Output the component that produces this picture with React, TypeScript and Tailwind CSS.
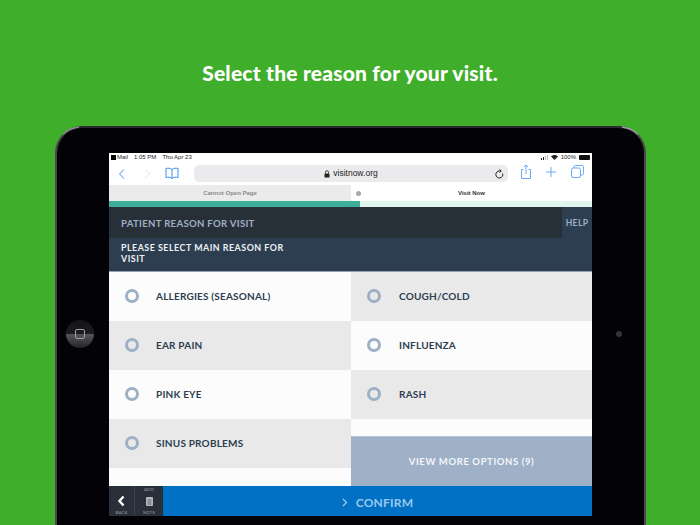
import React from "react";

function Radio() {
  return <span className="block w-[14px] h-[14px] mb-px rounded-full border-[3px] border-[#9db0c6] shrink-0" />;
}

function Row({ label, shade, right }: { label: string; shade?: boolean; right?: boolean }) {
  return (
    <div className={`h-[49px] flex items-center pl-[16px] ${shade ? "bg-[#e9e9e9]" : "bg-[#fcfcfc]"}`}>
      <Radio />
      <span className={`${right ? "ml-[18px]" : "ml-[17px]"} text-[10px] font-bold tracking-[0.2px] text-[#2d3e50] whitespace-nowrap`}>{label}</span>
    </div>
  );
}

export default function App() {
  return (
    <div className="w-[700px] h-[525px] bg-[#3fae2a] overflow-hidden flex flex-col font-['Lato',sans-serif]">
      <h1 className="h-[126px] pt-[59px] text-center text-white text-[21px] leading-[28px] font-black tracking-[0.2px] font-['Lato',sans-serif]">
        Select the reason for your visit.
      </h1>
      <div className="relative ml-[55px] w-[591px] h-[399px] bg-[#030307] rounded-t-[27px] border-t-2 border-x-2 border-t-[#2c2c30] border-x-[#48484c] pt-[25px] pl-[52px]">
        {/* corner highlights */}
        <svg className="absolute -left-[2px] -top-[2px]" width="30" height="30" viewBox="0 0 30 30" fill="none" stroke="#8a8a90" strokeWidth="1.500"><path d="M8 8.500C12 4 16 2 24 1" /></svg>
        <svg className="absolute -right-[2px] -top-[2px]" width="30" height="30" viewBox="0 0 30 30" fill="none" stroke="#a0a0a6" strokeWidth="1.500"><path d="M22 8.500C18 4 14 2 6 1" /></svg>
        {/* home button */}
        <div className="absolute left-[9px] top-[192px] w-[28px] h-[28px] rounded-full bg-[linear-gradient(180deg,#15161a_0%,#1a1b1f_48%,#55565a_52%,#232428_100%)] flex items-center justify-center">
          <div className="w-[10px] h-[10px] rounded-[2px] border border-[#a0a0a4]" />
        </div>
        {/* camera */}
        <div className="absolute left-[559px] top-[203px] w-[6px] h-[6px] rounded-full bg-[#34343a]" />

        <div className="w-[483px] h-[363px] bg-white flex flex-col font-['Liberation_Sans',sans-serif]">
          {/* status bar */}
          <div className="h-[9px] flex items-center justify-between px-[2px] text-[6px] leading-[9px] text-[#222]">
            <div className="flex items-center gap-[6px]">
              <span className="flex items-center gap-[1px]"><span className="block w-[5px] h-[5px] bg-black" />Mail</span>
              <span>1:05 PM</span>
              <span>Thu Apr 23</span>
            </div>
            <div className="flex items-center gap-[3px]">
              <svg width="7" height="5" viewBox="0 0 7 5"><rect x="0" y="3" width="1" height="2" fill="#222"/><rect x="2" y="2" width="1" height="3" fill="#222"/><rect x="4" y="1" width="1" height="4" fill="#bbb"/><rect x="6" y="0" width="1" height="5" fill="#bbb"/></svg>
              <svg width="7" height="5" viewBox="0 0 14 10"><path d="M7 10L0 3c4-4 10-4 14 0z" fill="#222"/></svg>
              <span>100%</span>
              <span className="block w-[11px] h-[5px] bg-[#111] rounded-[1px]" />
            </div>
          </div>
          {/* toolbar */}
          <div className="h-[23px] flex items-center relative">
            <div className="absolute left-[9px] top-[5px] flex items-center">
              <svg width="8" height="12" viewBox="0 0 8 12" fill="none" stroke="#3b8cf5" strokeWidth="1"><path d="M6 1.500L1.500 6 6 10.500" /></svg>
              <svg className="ml-[17px]" width="8" height="12" viewBox="0 0 8 12" fill="none" stroke="#e2e2e2" strokeWidth="1"><path d="M2 1.500L6.500 6 2 10.500" /></svg>
              <svg className="ml-[14px]" width="14" height="13" viewBox="0 0 14 13" fill="none" stroke="#3b8cf5" strokeWidth="1"><path d="M7 2.500C5.500 1 3 1 1 1.500v9c2-.5 4.500-.5 6 1 1.500-1.500 4-1.500 6-1v-9C11 1 8.500 1 7 2.500zM7 2.500v9" /></svg>
            </div>
            <div className="ml-[85px] w-[314px] h-[17px] rounded-[5px] bg-[#ebebed] flex items-center justify-center relative">
              <svg width="6" height="8" viewBox="0 0 6 8" className="mr-[3px]"><rect x="0.500" y="3.500" width="5" height="4" rx="0.500" fill="#222"/><path d="M1.500 3.500V2.200a1.500 1.500 0 013 0v1.300" fill="none" stroke="#222" strokeWidth="0.800"/></svg>
              <span className="text-[8.5px] text-[#222]">visitnow.org</span>
              <svg className="absolute right-[4px] top-[4px]" width="9" height="10" viewBox="0 0 9 10" fill="none" stroke="#222" strokeWidth="1"><path d="M7.700 4.500A3.500 3.500 0 114.500 2H6" /><path d="M4.500 0.500L6.300 2 4.500 3.500" /></svg>
            </div>
            <div className="absolute right-[8px] top-[2px] flex items-center">
              <svg width="12" height="15" viewBox="0 0 12 15" fill="none" stroke="#5aa0f5" strokeWidth="0.900"><path d="M3.500 5.500H1.500v9h9v-9H8.500M6 10V1M3.800 3L6 1l2.200 2" /></svg>
              <svg className="ml-[13px]" width="12" height="12" viewBox="0 0 12 12" fill="none" stroke="#5aa0f5" strokeWidth="0.900"><path d="M6 1v10M1 6h10" /></svg>
              <svg className="ml-[14px]" width="13" height="13" viewBox="0 0 13 13" fill="none" stroke="#5aa0f5" strokeWidth="0.900"><rect x="0.500" y="3" width="9" height="9.500" rx="1.500" /><path d="M3 3V1.800C3 1 3.600.5 4.500.5h6.500c1 0 1.500.6 1.500 1.500v6.500c0 .8-.5 1.500-1.500 1.500H9.500" /></svg>
            </div>
          </div>
          {/* tabs */}
          <div className="h-[16px] flex text-[6px] leading-[16px] text-center">
            <div className="w-[242px] bg-[#ebebeb] text-[#8a8a8a] font-bold">Cannot Open Page</div>
            <div className="w-[241px] relative text-[#333] font-bold">
              <span className="absolute left-[5px] top-[6px] w-[5px] h-[5px] rounded-full bg-[#a8a8a8]" />
              Visit Now
            </div>
          </div>
          {/* progress */}
          <div className="h-[6px] bg-[#dff5ee]">
            <div className="h-full w-[251px] bg-[#3fae98]" />
          </div>
          {/* header */}
          <div className="h-[31px] flex bg-[#272f39]">
            <div className="flex-1 pl-[12px] pt-px text-[9.6px] leading-[31px] font-bold tracking-[0.3px] text-[#a0b0c4] font-['Lato',sans-serif]">
              PATIENT REASON FOR VISIT
            </div>
            <div className="w-[30px] pt-px bg-[#2d3e50] text-center text-[8.5px] leading-[31px] font-bold tracking-[0.4px] text-[#a0b0c4] font-['Lato',sans-serif]">HELP</div>
          </div>
          <div className="h-[33px] bg-[#2d3e50] pl-[12px] pt-[3.5px] text-[8.9px] leading-[11.5px] font-bold tracking-[0.5px] text-[#eef1f4] font-['Lato',sans-serif]">
            <div className="w-[180px]">PLEASE SELECT MAIN REASON FOR VISIT</div>
          </div>
          <div className="h-px bg-[#9aa3ad]" />
          {/* options */}
          <div className="h-[214px] grid grid-cols-[242px_241px] font-['Lato',sans-serif]">
            <div className="bg-[#fcfcfc]">
              <Row label="ALLERGIES (SEASONAL)" />
              <Row label="EAR PAIN" shade />
              <Row label="PINK EYE" />
              <Row label="SINUS PROBLEMS" shade />
            </div>
            <div className="flex flex-col bg-[#fcfcfc]">
              <Row label="COUGH/COLD" shade right />
              <Row label="INFLUENZA" right />
              <Row label="RASH" shade right />
              <div className="mt-auto h-[50px] pt-px bg-[#9fb1c7] border-t border-[#b8c5d5] flex items-center justify-center text-[9.5px] font-bold tracking-[0.6px] text-[#f4f6f9]">
                VIEW MORE OPTIONS (9)
              </div>
            </div>
          </div>
          {/* bottom bar */}
          <div className="h-[30px] flex bg-[#0071c5] font-['Lato',sans-serif]">
            <div className="w-[26px] bg-[#29303a] border-r border-[#3a424d] flex flex-col items-center justify-end text-[4.5px] text-[#8f98a3] leading-[5px] pb-px">
              <svg width="8" height="12" viewBox="0 0 8 12" fill="none" stroke="#fff" strokeWidth="2.400" className="mb-[3px] mr-px"><path d="M6.500 1.500L2.500 6l4 4.500" /></svg>
              BACK
            </div>
            <div className="w-[28px] bg-[#29303a] flex flex-col items-center justify-between py-px text-[4.5px] text-[#8f98a3] leading-[5px]">
              <span>ADD</span>
              <svg width="7" height="9" viewBox="0 0 7 9"><rect width="7" height="9" rx="1" fill="#b4b9bf"/><path d="M1.500 3h4M1.500 5h4M1.500 7h4" stroke="#29303a" strokeWidth="0.600"/></svg>
              <span>NOTE</span>
            </div>
            <div className="flex-1 flex items-center justify-center pt-[3px] text-[12px] font-bold tracking-[0.2px] text-[#9cc8ec]">
              <svg width="6" height="9" viewBox="0 0 6 9" fill="none" stroke="#9cc8ec" strokeWidth="1.300" className="mr-[8px]"><path d="M1 1l3.500 3.500L1 8" /></svg>
              CONFIRM
            </div>
          </div>
        </div>
      </div>
    </div>
  );
}
